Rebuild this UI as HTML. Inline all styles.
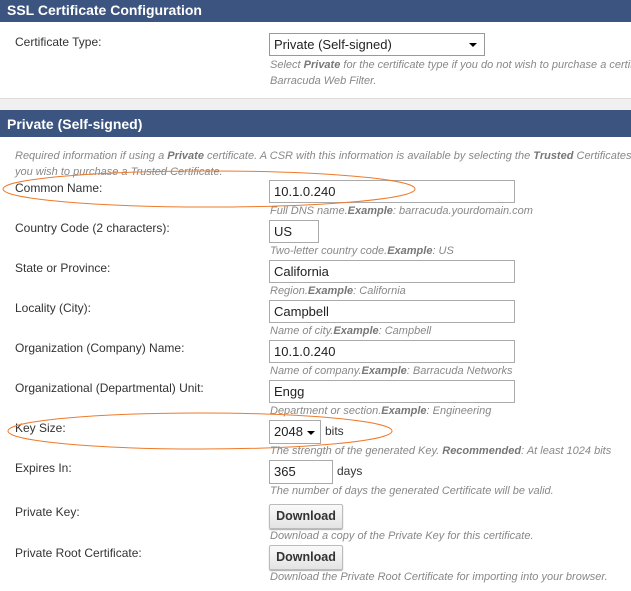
<!DOCTYPE html>
<html><head><style>
body{margin:0;width:631px;height:591px;background:#fff;font-family:"Liberation Sans",Arial,sans-serif;position:relative;overflow:hidden}
.hd{position:absolute;left:0;width:631px;background:#3b5580;color:#fff;font-weight:bold;font-size:14px;padding-left:7px;box-sizing:border-box}
.l{position:absolute;left:15px;font-size:12px;color:#333}
.in{position:absolute;left:269px;height:23px;border:1px solid #aaa;box-sizing:border-box;font-size:13px;color:#222;padding:3px 4px;background:#fff}
.h{position:absolute;left:270px;font-size:11px;font-style:italic;color:#888}
.h b{color:#777}
.btn{position:absolute;left:269px;width:74px;height:25px;border:1px solid #bbb;border-radius:2px;box-sizing:border-box;background:linear-gradient(#fafafa,#e4e4e4);font-size:12.5px;font-weight:bold;color:#333;text-align:center;line-height:23px;box-shadow:0 1px 1px #aaa}
.ar{display:inline-block;width:0;height:0;border-left:4px solid transparent;border-right:4px solid transparent;border-top:4px solid #000;vertical-align:middle}
.u{position:absolute;font-size:12px;color:#333}
</style></head><body>
<div class="hd" style="top:0;height:22px;line-height:20px">SSL Certificate Configuration</div>
<div class="l" style="top:35px">Certificate Type:</div>
<div class="in" style="top:33px;width:216px;height:23px;border-color:#999;font-size:13px">Private (Self-signed)<span class="ar" style="position:absolute;right:7px;top:9px"></span></div>
<div class="h" style="top:57px;line-height:16px;width:400px;white-space:nowrap">Select <b>Private</b> for the certificate type if you do not wish to purchase a certificate<br>Barracuda Web Filter.</div>
<div style="position:absolute;top:98px;left:0;width:631px;height:12px;background:#f0f0f0;border-top:1px solid #ddd"></div>
<div class="hd" style="top:110px;height:27px;line-height:28px">Private (Self-signed)</div>
<div class="h" style="left:15px;top:148px;line-height:16px;white-space:nowrap">Required information if using a <b>Private</b> certificate. A CSR with this information is available by selecting the <b>Trusted</b> Certificates Type if<br>you wish to purchase a Trusted Certificate.</div>

<div class="l" style="top:181px">Common Name:</div>
<div class="in" style="top:180px;width:246px">10.1.0.240</div>
<div class="h" style="top:205px">Full DNS name.<b>Example</b>: barracuda.yourdomain.com</div>

<div class="l" style="top:221px">Country Code (2 characters):</div>
<div class="in" style="top:220px;width:50px">US</div>
<div class="h" style="top:245px">Two-letter country code.<b>Example</b>: US</div>

<div class="l" style="top:261px">State or Province:</div>
<div class="in" style="top:260px;width:246px">California</div>
<div class="h" style="top:285px">Region.<b>Example</b>: California</div>

<div class="l" style="top:301px">Locality (City):</div>
<div class="in" style="top:300px;width:246px">Campbell</div>
<div class="h" style="top:325px">Name of city.<b>Example</b>: Campbell</div>

<div class="l" style="top:341px">Organization (Company) Name:</div>
<div class="in" style="top:340px;width:246px">10.1.0.240</div>
<div class="h" style="top:365px">Name of company.<b>Example</b>: Barracuda Networks</div>

<div class="l" style="top:381px">Organizational (Departmental) Unit:</div>
<div class="in" style="top:380px;width:246px">Engg</div>
<div class="h" style="top:405px">Department or section.<b>Example</b>: Engineering</div>

<div class="l" style="top:421px">Key Size:</div>
<div class="in" style="top:420px;width:52px;height:24px">2048 <span class="ar"></span></div>
<div class="u" style="left:325px;top:424px">bits</div>
<div class="h" style="top:445px">The strength of the generated Key. <b>Recommended</b>: At least 1024 bits</div>

<div class="l" style="top:461px">Expires In:</div>
<div class="in" style="top:460px;width:64px;height:24px">365</div>
<div class="u" style="left:337px;top:464px">days</div>
<div class="h" style="top:485px">The number of days the generated Certificate will be valid.</div>

<div class="l" style="top:505px">Private Key:</div>
<div class="btn" style="top:504px">Download</div>
<div class="h" style="top:530px">Download a copy of the Private Key for this certificate.</div>

<div class="l" style="top:546px">Private Root Certificate:</div>
<div class="btn" style="top:545px">Download</div>
<div class="h" style="top:571px">Download the Private Root Certificate for importing into your browser.</div>

<svg width="631" height="591" style="position:absolute;left:0;top:0">
<ellipse cx="209" cy="189" rx="206" ry="18" fill="none" stroke="#ee7a2a" stroke-width="1"/>
<ellipse cx="200" cy="431" rx="192" ry="18" fill="none" stroke="#ee7a2a" stroke-width="1"/>
</svg>
</body></html>
